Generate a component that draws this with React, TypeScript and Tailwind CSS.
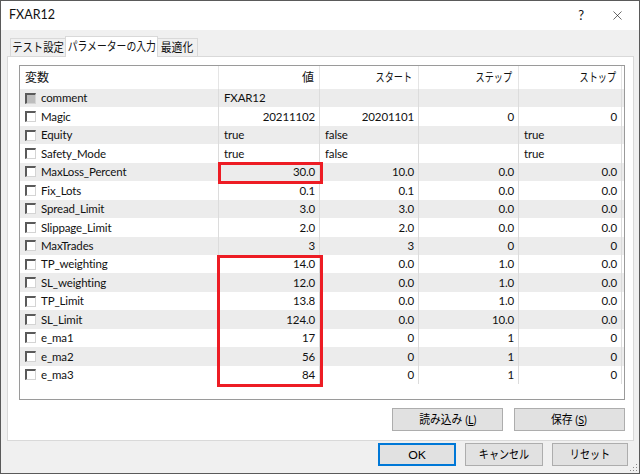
import { X } from 'lucide-react';

type Row = {
  name: string;
  values: string[];
  align: 'left' | 'right';
  disabled?: boolean;
};

const rows: Row[] = [
  { name: 'comment', values: ['FXAR12', '', '', ''], align: 'left', disabled: true },
  { name: 'Magic', values: ['20211102', '20201101', '0', '0'], align: 'right' },
  { name: 'Equity', values: ['true', 'false', '', 'true'], align: 'left' },
  { name: 'Safety_Mode', values: ['true', 'false', '', 'true'], align: 'left' },
  { name: 'MaxLoss_Percent', values: ['30.0', '10.0', '0.0', '0.0'], align: 'right' },
  { name: 'Fix_Lots', values: ['0.1', '0.1', '0.0', '0.0'], align: 'right' },
  { name: 'Spread_Limit', values: ['3.0', '3.0', '0.0', '0.0'], align: 'right' },
  { name: 'Slippage_Limit', values: ['2.0', '2.0', '0.0', '0.0'], align: 'right' },
  { name: 'MaxTrades', values: ['3', '3', '0', '0'], align: 'right' },
  { name: 'TP_weighting', values: ['14.0', '0.0', '1.0', '0.0'], align: 'right' },
  { name: 'SL_weighting', values: ['12.0', '0.0', '1.0', '0.0'], align: 'right' },
  { name: 'TP_Limit', values: ['13.8', '0.0', '1.0', '0.0'], align: 'right' },
  { name: 'SL_Limit', values: ['124.0', '0.0', '10.0', '0.0'], align: 'right' },
  { name: 'e_ma1', values: ['17', '0', '1', '0'], align: 'right' },
  { name: 'e_ma2', values: ['56', '0', '1', '0'], align: 'right' },
  { name: 'e_ma3', values: ['84', '0', '1', '0'], align: 'right' },
];

// 値 / スタート / ステップ / ストップ の列幅
const colWidths = ['w-[101px]', 'w-[99px]', 'w-[100px]', 'w-[103px]'];

function CheckBox({ disabled }: { disabled?: boolean }) {
  return (
    <div
      className={`w-[11px] h-[11px] shrink-0 border-t-2 border-l-2 border-r border-b border-t-[#5a5a5a] border-l-[#5a5a5a] border-r-[#d4d4d4] border-b-[#d4d4d4] ${
        disabled ? 'bg-[#bdbdbd]' : 'bg-white'
      }`}
    />
  );
}

function Button({ children, width, focused }: { children: React.ReactNode; width: string; focused?: boolean }) {
  return (
    <div
      className={`${width} h-[23px] flex items-center justify-center bg-[#e1e1e1] border ${
        focused ? 'border-[#0078d7] shadow-[inset_0_0_0_1px_#0078d7]' : 'border-[#adadad]'
      } text-black`}
    >
      {children}
    </div>
  );
}

export default function App() {
  return (
    <div
      className="w-[640px] h-[474px] bg-[#f0f0f0] border border-[#5a5a5a] flex flex-col relative text-[12px] leading-none text-[#111]"
      style={{ fontFamily: 'Lato, "Noto Sans CJK JP", sans-serif' }}
    >
      {/* タイトルバー */}
      <div className="h-[29px] bg-white flex items-center pl-[8px] pr-[14px] shrink-0">
        <span className="text-[12.5px]">FXAR12</span>
        <div className="ml-auto flex items-center gap-[26px]">
          <span className="text-[13px]">?</span>
          <X size={15} strokeWidth={1} />
        </div>
      </div>

      <div className="flex flex-col px-[6px] pr-[5px]">
        {/* タブ */}
        <div className="flex items-end h-[20px] mt-[6px] ml-[3px] relative z-10">
          <div className="w-[55px] h-[18px] flex items-center justify-center bg-[#f0f0f0] border border-b-0 border-r-0 border-[#d9d9d9]">
            <span className="inline-block scale-x-[0.86] whitespace-nowrap">テスト設定</span>
          </div>
          <div className="w-[93px] h-[21px] -mb-px flex items-center justify-center bg-white border border-b-0 border-[#d9d9d9]">
            <span className="inline-block scale-x-[0.82] whitespace-nowrap">パラメーターの入力</span>
          </div>
          <div className="w-[40px] h-[18px] flex items-center justify-center bg-[#f0f0f0] border border-b-0 border-l-0 border-[#d9d9d9]">
            <span className="inline-block scale-x-[0.9] whitespace-nowrap">最適化</span>
          </div>
        </div>

        {/* タブパネル */}
        <div className="h-[385px] bg-white border border-[#d9d9d9] flex flex-col pt-[8px] pl-[11px] pr-[8px]">
          <div className="relative w-[606px] h-[335px] border border-[#9a9a9a] bg-white flex flex-col text-[11.5px] tracking-[-0.15px]">
            {/* ヘッダー */}
            <div className="flex h-[23px] shrink-0 text-[12px] tracking-normal">
              <div className="w-[199px] border-r border-[#e5e5e5] flex items-center pl-[5px]">変数</div>
              <div className="w-[101px] border-r border-[#e5e5e5] flex items-center justify-end pr-[5px]">値</div>
              <div className="w-[99px] border-r border-[#e5e5e5] flex items-center justify-end pr-[6px]">
                <span className="inline-block scale-x-[0.76] origin-right whitespace-nowrap">スタート</span>
              </div>
              <div className="w-[100px] border-r border-[#e5e5e5] flex items-center justify-end pr-[6px]">
                <span className="inline-block scale-x-[0.76] origin-right whitespace-nowrap">ステップ</span>
              </div>
              <div className="w-[103px] border-r border-[#e5e5e5] flex items-center justify-end pr-[5px]">
                <span className="inline-block scale-x-[0.76] origin-right whitespace-nowrap">ストップ</span>
              </div>
            </div>

            {/* 行 */}
            {rows.map((row, idx) => (
              <div
                key={row.name}
                className={`flex h-[18.44px] shrink-0 ${idx % 2 === 0 ? 'bg-[#ececec]' : 'bg-white'}`}
              >
                <div className="w-[199px] border-r border-[#dcdcdc] flex items-center pl-[5px] gap-[5px]">
                  <CheckBox disabled={row.disabled} />
                  <span>{row.name}</span>
                </div>
                {row.values.map((v, i) => (
                  <div
                    key={i}
                    className={`${colWidths[i]} border-r border-[#dcdcdc] flex items-center ${
                      row.align === 'right' ? 'justify-end pr-[4px]' : 'justify-start pl-[5px]'
                    }`}
                  >
                    {v}
                  </div>
                ))}
              </div>
            ))}

            {/* 赤枠 */}
            <div className="absolute left-[198px] top-[96px] w-[105px] h-[22px] border-[3px] border-[#ed1c24]" />
            <div className="absolute left-[197px] top-[189px] w-[106px] h-[132px] border-[3px] border-[#ed1c24]" />
          </div>

          <div className="flex justify-end gap-[11px] mt-[8px] w-[606px]">
            <Button width="w-[111px]">
              <span className="inline-block scale-x-[0.9] whitespace-nowrap">
                読み込み (<span className="underline">L</span>)
              </span>
            </Button>
            <Button width="w-[111px]">
              <span className="inline-block scale-x-[0.9] whitespace-nowrap">
                保存 (<span className="underline">S</span>)
              </span>
            </Button>
          </div>
        </div>

        {/* 下部ボタン */}
        <div className="flex justify-end gap-[9px] mt-[2px] pr-[6px]">
          <Button width="w-[78px]" focused>
            OK
          </Button>
          <Button width="w-[78px]">
            <span className="inline-block scale-x-[0.84] whitespace-nowrap">キャンセル</span>
          </Button>
          <Button width="w-[76px]">
            <span className="inline-block scale-x-[0.84] whitespace-nowrap">リセット</span>
          </Button>
        </div>
      </div>

      {/* サイズ変更グリップ */}
      <svg className="absolute right-[1px] bottom-[1px]" width="8" height="8" viewBox="0 0 8 8">
        <rect x="6" y="0" width="1" height="1" fill="#8a8a8a" />
        <rect x="3" y="3" width="1" height="1" fill="#8a8a8a" />
        <rect x="6" y="3" width="1" height="1" fill="#8a8a8a" />
        <rect x="0" y="6" width="1" height="1" fill="#8a8a8a" />
        <rect x="3" y="6" width="1" height="1" fill="#8a8a8a" />
        <rect x="6" y="6" width="1" height="1" fill="#8a8a8a" />
      </svg>
    </div>
  );
}
